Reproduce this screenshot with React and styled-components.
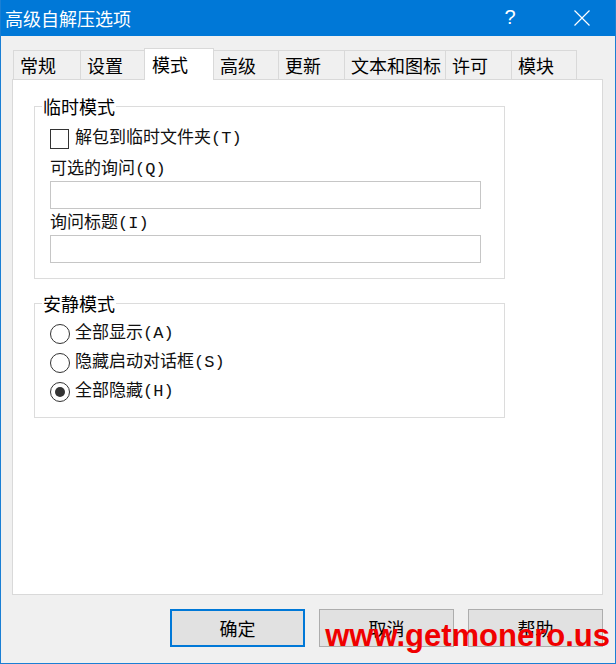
import React, { useState } from 'react';
import styled, { createGlobalStyle } from 'styled-components';

const GlobalStyle = createGlobalStyle`
  html, body {
    margin: 0;
    padding: 0;
    background: #f0f0f0;
  }
  body {
    font-family: "Noto Sans CJK SC", "Liberation Sans", sans-serif;
  }
`;

const tabs = [
  { label: '常规', width: 68 },
  { label: '设置', width: 65 },
  { label: '模式', width: 70 },
  { label: '高级', width: 66 },
  { label: '更新', width: 67 },
  { label: '文本和图标', width: 102 },
  { label: '许可', width: 67 },
  { label: '模块', width: 66 },
];

const quietOptions = ['全部显示(A)', '隐藏启动对话框(S)', '全部隐藏(H)'];

const App = () => {
  const [activeTab, setActiveTab] = useState('模式');
  const [extractTemp, setExtractTemp] = useState(false);
  const [quiet, setQuiet] = useState(2);

  return (
    <>
      <GlobalStyle />
      <Window>
        <TitleBar>
          <Title>高级自解压选项</Title>
          <TitleButton type="button">?</TitleButton>
          <CloseButton type="button">
            <svg width="16" height="16" viewBox="0 0 16 16">
              <path d="M0.5 0.5 L15.5 15.5 M15.5 0.5 L0.5 15.5" stroke="#fff" strokeWidth="1.2" fill="none" />
            </svg>
          </CloseButton>
        </TitleBar>

        <Body>
          <TabRow>
            {tabs.map((t) => (
              <Tab
                key={t.label}
                $width={t.width}
                $active={t.label === activeTab}
                onClick={() => setActiveTab(t.label)}
              >
                {t.label}
              </Tab>
            ))}
          </TabRow>

          <Panel>
            <Group>
              <Legend>临时模式</Legend>
              <CheckRow onClick={() => setExtractTemp(!extractTemp)}>
                <CheckBox>{extractTemp ? '✓' : ''}</CheckBox>
                <Label>解包到临时文件夹(T)</Label>
              </CheckRow>
              <FieldLabel $top={9}>可选的询问(Q)</FieldLabel>
              <TextInput type="text" />
              <FieldLabel $top={4}>询问标题(I)</FieldLabel>
              <TextInput type="text" />
            </Group>

            <Group $quiet>
              <Legend>安静模式</Legend>
              {quietOptions.map((opt, i) => (
                <RadioRow key={opt} onClick={() => setQuiet(i)}>
                  <Radio $checked={quiet === i} />
                  <Label>{opt}</Label>
                </RadioRow>
              ))}
            </Group>
          </Panel>

          <ButtonBar>
            <DialogButton type="button" $default>确定</DialogButton>
            <DialogButton type="button">取消</DialogButton>
            <DialogButton type="button">帮助</DialogButton>
            <Watermark>www.getmonero.us</Watermark>
          </ButtonBar>
        </Body>
      </Window>
    </>
  );
};

const Window = styled.div`
  width: 616px;
  height: 664px;
  box-sizing: border-box;
  border: 1px solid #1a7fd4;
  border-top: none;
  background: #f0f0f0;
  display: flex;
  flex-direction: column;
  overflow: hidden;
`;

const TitleBar = styled.div`
  height: 36px;
  background: #0078d7;
  display: flex;
  align-items: center;
  color: #fff;
  margin: 0 -1px;
  padding: 0 0 0 5px;
`;

const Title = styled.div`
  flex: 1;
  font-size: 18px;
  line-height: 36px;
  margin-top: -1px;
`;

const TitleButton = styled.button`
  all: unset;
  width: 46px;
  text-align: center;
  font-family: "Liberation Sans", sans-serif;
  font-weight: 300;
  font-size: 20px;
  color: #fff;
  margin-right: 26px;
  margin-top: -2px;
`;

const CloseButton = styled.button`
  all: unset;
  width: 46px;
  height: 36px;
  display: flex;
  align-items: center;
  justify-content: center;
  margin-right: 11px;
`;

const Body = styled.div`
  flex: 1;
  display: flex;
  flex-direction: column;
  padding: 12px 12px 0 11px;
`;

const TabRow = styled.div`
  display: flex;
  align-items: flex-end;
  height: 31px;
  margin-left: 1px;
  position: relative;
  z-index: 1;
`;

const Tab = styled.div`
  box-sizing: border-box;
  width: ${(p) => p.$width}px;
  height: ${(p) => (p.$active ? 32 : 29)}px;
  margin-bottom: ${(p) => (p.$active ? -1 : 0)}px;
  margin-left: -1px;
  padding: 0 0 0 ${(p) => (p.$active ? 7 : 6)}px;
  border: 1px solid #d9d9d9;
  border-bottom: none;
  background: ${(p) => (p.$active ? '#fff' : '#f0f0f0')};
  font-size: 18px;
  line-height: ${(p) => (p.$active ? 30 : 29)}px;
  color: #000;
  white-space: nowrap;
  cursor: default;
  &:first-child {
    margin-left: 0;
  }
`;

const Panel = styled.div`
  box-sizing: border-box;
  height: 516px;
  background: #fff;
  border: 1px solid #d9d9d9;
  padding: 15px 0 0 21px;
  display: flex;
  flex-direction: column;
  align-items: flex-start;
`;

const Group = styled.fieldset`
  box-sizing: border-box;
  width: 471px;
  margin: ${(p) => (p.$quiet ? '13px 0 0' : '0')};
  border: 1px solid #dcdcdc;
  padding: 0 0 ${(p) => (p.$quiet ? 11 : 15)}px 15px;
  display: flex;
  flex-direction: column;
  align-items: flex-start;
  min-inline-size: 0;
`;

const Legend = styled.legend`
  font-size: 18px;
  line-height: 22px;
  padding: 0 1px;
  margin-left: -8px;
  color: #000;
`;

const Label = styled.span`
  font-family: "Liberation Mono", "Noto Sans CJK SC", monospace;
  font-size: 17px;
  color: #111;
  line-height: 22px;
`;

const CheckRow = styled.div`
  display: flex;
  align-items: center;
  gap: 6px;
  height: 22px;
  margin-top: 11px;
  cursor: default;
`;

const CheckBox = styled.span`
  box-sizing: border-box;
  width: 19px;
  height: 20px;
  border: 1px solid #333;
  background: #fff;
  display: flex;
  align-items: center;
  justify-content: center;
  font-size: 14px;
`;

const FieldLabel = styled(Label)`
  display: block;
  margin-top: ${(p) => p.$top}px;
`;

const TextInput = styled.input`
  box-sizing: border-box;
  width: 431px;
  height: 28px;
  border: 1px solid #c6c6c6;
  margin: 0;
  padding: 0 4px;
  font-size: 16px;
  outline: none;
`;

const RadioRow = styled.div`
  display: flex;
  align-items: center;
  gap: 5px;
  height: 29px;
  &:first-of-type {
    margin-top: 5px;
  }
`;

const Radio = styled.span`
  box-sizing: border-box;
  width: 20px;
  height: 20px;
  border-radius: 50%;
  border: 1px solid #333;
  background: #fff;
  display: flex;
  align-items: center;
  justify-content: center;
  &::after {
    content: '';
    width: 10px;
    height: 10px;
    border-radius: 50%;
    background: #333;
    display: ${(p) => (p.$checked ? 'block' : 'none')};
  }
`;

const ButtonBar = styled.div`
  display: flex;
  justify-content: flex-end;
  gap: 14px;
  margin-top: 14px;
  position: relative;
`;

const DialogButton = styled.button`
  box-sizing: border-box;
  width: 135px;
  height: 38px;
  margin: 0;
  background: #e1e1e1;
  border: ${(p) => (p.$default ? '2px solid #0078d7' : '1px solid #adadad')};
  font-family: "Noto Sans CJK SC", sans-serif;
  font-size: 18px;
  color: #000;
  padding: 0;
`;

const Watermark = styled.div`
  position: absolute;
  right: -7px;
  top: 10px;
  font-family: "Liberation Sans", sans-serif;
  font-weight: bold;
  font-size: 31px;
  line-height: 34px;
  color: #f00000;
  pointer-events: none;
  white-space: nowrap;
`;

export default App;
